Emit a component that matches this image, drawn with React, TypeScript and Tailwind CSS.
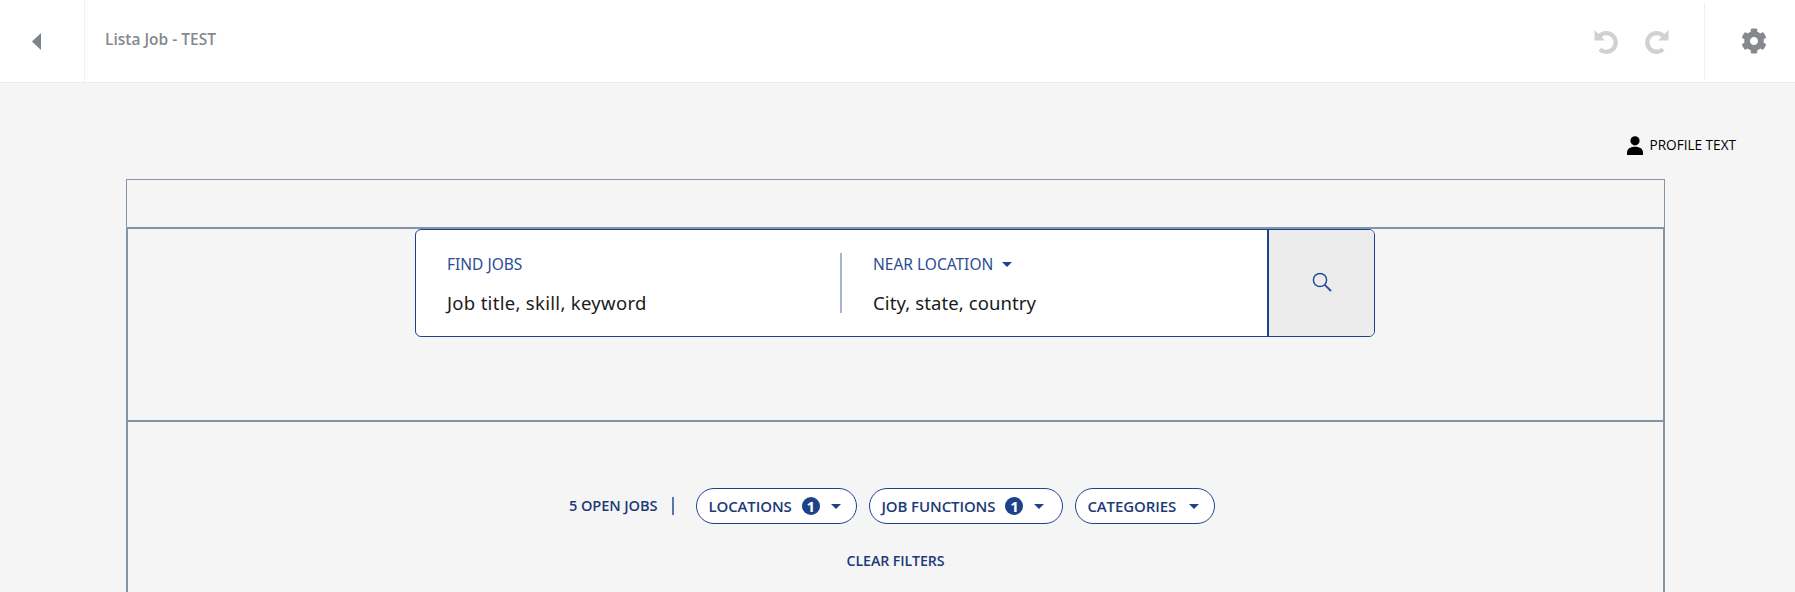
import React from 'react';
import { FaCog } from 'react-icons/fa';

const Caret = ({ className }: { className: string }) => (
  <svg viewBox="0 0 10 5" className={className} fill="currentColor">
    <path d="M0 0h10L5 5z" />
  </svg>
);

// undo / redo are the same shape, redo is just flipped
const UndoIcon = ({ className }: { className: string }) => (
  <svg viewBox="0 0 24 24" className={className} fill="none">
    <path d="M5.4 6.6a9 9 0 1 1 .2 12.8" stroke="currentColor" strokeWidth="4.2" />
    <path d="M0.5 1V11H10.5z" fill="currentColor" />
  </svg>
);

const FilterChip = ({ label, count, widthClass, caretClass }: { label: string; count?: number; widthClass: string; caretClass: string }) => (
  <button className={`flex h-[36px] items-center rounded-full border border-[#1d4289] bg-white pl-[11px] text-[15px] font-semibold tracking-[-0.1px] text-[#1d3a78] ${widthClass}`}>
    <span>{label}</span>
    {count !== undefined && (
      <span className="ml-[10px] flex h-[18px] w-[18px] items-center justify-center rounded-full bg-[#1d4289] text-[15px] font-bold text-white">
        {count}
      </span>
    )}
    <Caret className={`h-[5px] w-[10px] text-[#1d4289] ${caretClass}`} />
  </button>
);

export default function App() {
  return (
    <div className="h-[592px] overflow-hidden bg-[#f5f5f5] font-['Open_Sans',sans-serif]">
      {/* Top bar */}
      <header className="flex h-[83px] items-center border-b border-[#ececec] bg-white">
        <div className="flex h-full w-[85px] items-center border-r border-[#f0f0f0] pl-[32px]">
          <svg viewBox="0 0 9 17" className="h-[17px] w-[9px] text-[#7f8488]" fill="currentColor">
            <path d="M9 0v17L0 8.5z" />
          </svg>
        </div>
        <h1 className="-mt-[3px] ml-[20px] text-[15.5px] font-semibold text-[#85898d]">Lista Job - TEST</h1>
        <div className="ml-auto flex items-center gap-[25px] text-[#d0d1d2]">
          <UndoIcon className="h-[25px] w-[25px]" />
          <UndoIcon className="h-[25px] w-[25px] -scale-x-100" />
        </div>
        <div className="ml-[35px] flex h-[77px] w-[91px] items-center justify-center border-l border-[#f0f0f0] pl-[7px]">
          <FaCog className="h-[26px] w-[26px] text-[#85898d]" />
        </div>
      </header>

      {/* Profile */}
      <div className="flex h-[96px] items-start justify-end pr-[59px] pt-[52px]">
        <div className="flex items-center gap-[6px] text-[13.6px] text-black">
          <svg viewBox="0 0 16 19" className="h-[19px] w-[16px]" fill="currentColor">
            <circle cx="8" cy="4.8" r="4.6" />
            <path d="M0 19v-2.6C0 13 3 10.7 8 10.7s8 2.3 8 5.7V19z" />
          </svg>
          <span>PROFILE TEXT</span>
        </div>
      </div>

      {/* Job search widget */}
      <div className="ml-[126px] h-[413px] w-[1539px] border border-b-0 border-[#8595a8]">
        <div className="h-[47px]" />

        <div className="h-[366px] border-x border-[#8595a8]">
          <div className="h-[195px] border-y-2 border-[#8595a8]">
            <div className="ml-[287px] flex h-[108px] w-[960px] overflow-hidden rounded-[6px] border border-[#1d4289] bg-white font-['Noto_Sans',sans-serif]">
              <div className="flex flex-1 items-center">
                <div className="w-[424px] pl-[31px] pt-[3px]">
                  <div className="text-[15.5px] text-[#2a4d95]">FIND JOBS</div>
                  <div className="mt-[13px] text-[18.5px] tracking-[0.3px] text-[#1a1a1a]">Job title, skill, keyword</div>
                </div>
                <div className="h-[60px] w-[2px] bg-[#a5b4d4]" />
                <div className="pl-[31px] pt-[3px]">
                  <div className="flex items-center text-[15.5px] text-[#2a4d95]">
                    NEAR LOCATION
                    <Caret className="ml-[9px] h-[5px] w-[10px] text-[#1d4289]" />
                  </div>
                  <div className="mt-[13px] text-[18.5px] tracking-[0.1px] text-[#1a1a1a]">City, state, country</div>
                </div>
              </div>
              <div className="flex w-[107px] items-center justify-center border-l-2 border-[#1d4289] bg-[#ececec] pb-[3px]">
                <svg viewBox="0 0 20 20" className="h-[20px] w-[20px] text-[#2a4d95]" fill="none" stroke="currentColor">
                  <circle cx="8" cy="8" r="6.6" strokeWidth="1.5" />
                  <path d="M12.8 12.8L19 19" strokeWidth="1.9" />
                </svg>
              </div>
            </div>
          </div>

          <div className="pt-[66px]">
            <div className="flex items-center pl-[441px]">
              <span className="text-[14.6px] font-semibold tracking-[-0.1px] text-[#1d3a78]">5 OPEN JOBS</span>
              <div className="ml-[15px] mr-[22px] h-[18px] w-[2px] bg-[#5a75ad]" />
              <div className="flex gap-[12px]">
                <FilterChip label="LOCATIONS" count={1} widthClass="w-[161px]" caretClass="ml-[11px]" />
                <FilterChip label="JOB FUNCTIONS" count={1} widthClass="w-[194px]" caretClass="ml-[11px]" />
                <FilterChip label="CATEGORIES" widthClass="w-[140px]" caretClass="ml-[13px]" />
              </div>
            </div>
            <div className="mt-[26px] text-center text-[14.2px] font-semibold tracking-[-0.1px] text-[#1d3a78]">CLEAR FILTERS</div>
          </div>
        </div>
      </div>
    </div>
  );
}
